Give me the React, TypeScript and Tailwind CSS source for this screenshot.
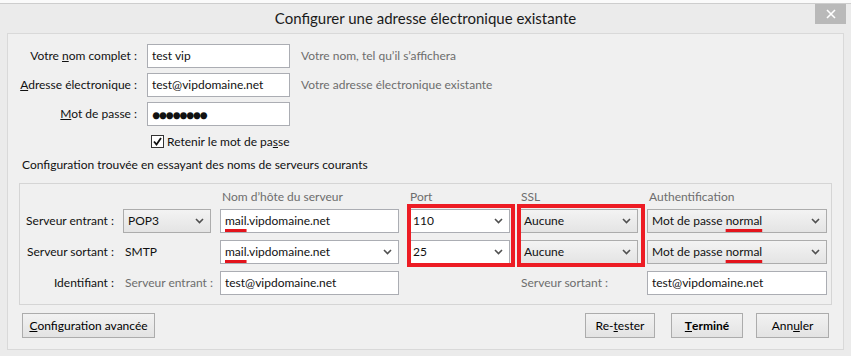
import React from "react"

const font = "font-['Lato','Noto_Sans',sans-serif]"

function Chevron() {
  return (
    <svg width="9" height="6" viewBox="0 0 9 6" className="shrink-0">
      <path d="M1 1 L4.5 4.5 L8 1" fill="none" stroke="#505050" strokeWidth="1.6" />
    </svg>
  )
}

function Field({ children, className = "" }: { children?: React.ReactNode; className?: string }) {
  return (
    <div className={"flex h-[24px] items-center border border-[#abadb3] bg-white pl-[4px] " + className}>
      {children}
    </div>
  )
}

function Combo({ children, white = false }: { children: React.ReactNode; white?: boolean }) {
  return (
    <div
      className={
        "flex h-[24px] items-center justify-between border pl-[4px] pr-[6px] " +
        (white
          ? "border-[#abadb3] bg-white"
          : "border-[#acacac] bg-linear-to-b from-[#f3f3f3] to-[#e4e4e4]")
      }
    >
      <span>{children}</span>
      <Chevron />
    </div>
  )
}

function Button({ children, className = "" }: { children: React.ReactNode; className?: string }) {
  return (
    <button
      className={
        "flex h-[25px] items-center justify-center border border-[#acacac] bg-linear-to-b from-[#f2f2f2] to-[#e3e3e3] text-[12px] text-black " +
        className
      }
    >
      {children}
    </button>
  )
}

const mark = "underline decoration-[#e3141c] decoration-[3px] underline-offset-[4px]"

export default function App() {
  return (
    <div className={"h-[356px] w-[851px] overflow-hidden whitespace-nowrap bg-[#ebebeb] text-[12px] text-[#111] " + font}>
      <div className="h-[4px] border-b border-[#cdcdcd] bg-[#fafafa]" />

      {/* title bar */}
      <div className="relative flex h-[29px] items-center justify-center">
        <span className="text-[15px] text-[#1a1a1a]">Configurer une adresse électronique existante</span>
        <div className="absolute right-[5px] top-0 flex h-[20px] w-[31px] items-center justify-center bg-[#b9b9b9]">
          <svg width="10" height="10" viewBox="0 0 10 10">
            <path d="M1 1 L9 9 M9 1 L1 9" stroke="#fff" strokeWidth="1.6" />
          </svg>
        </div>
      </div>

      {/* panel */}
      <div className="mx-[7px] h-[317px] border border-[#d9d9d9] bg-[#f0f0f0] pt-[10px]">
        <div className="grid grid-cols-[129px_143px_1fr] items-center gap-x-[10px] gap-y-[5px]">
          <div className="text-right">
            Votre <span className="underline">n</span>om complet :
          </div>
          <Field>test vip</Field>
          <div className="pl-[1px] text-[#6d6d6d]">Votre nom, tel qu’il s’affichera</div>

          <div className="text-right">
            <span className="underline">A</span>dresse électronique :
          </div>
          <Field>test@vipdomaine.net</Field>
          <div className="pl-[1px] text-[#6d6d6d]">Votre adresse électronique existante</div>

          <div className="text-right">
            <span className="underline">M</span>ot de passe :
          </div>
          <Field className="border-[#569de5] text-[14px] tracking-[-1.6px]">●●●●●●●●</Field>
          <div />
        </div>

        <div className="ml-[143px] mt-[9px] flex h-[13px] items-center gap-[3px]">
          <div className="flex h-[13px] w-[13px] items-center justify-center border border-[#333] bg-white">
            <svg width="9" height="9" viewBox="0 0 9 9">
              <path d="M1 4.5 L3.5 7.5 L8 1" fill="none" stroke="#111" strokeWidth="1.8" />
            </svg>
          </div>
          <span>
            Retenir le mot de pa<span className="underline">s</span>se
          </span>
        </div>

        <div className="ml-[14px] mt-[9px] h-[16px] leading-[16px]">
          Configuration trouvée en essayant des noms de serveurs courants
        </div>

        {/* server group */}
        <div className="relative mx-[11px] mt-[10px] h-[122px] border border-[#d5d5d5] pt-[5px]">
          <div className="grid grid-cols-[94px_88px_179px_102px_119px_180px] items-center gap-x-[9px]">
            <div />
            <div />
            <div className="h-[16px] pl-[2px] leading-[16px] text-[#6d6d6d]">Nom d’hôte du serveur</div>
            <div className="h-[16px] pl-[2px] leading-[16px] text-[#6d6d6d]">Port</div>
            <div className="h-[16px] pl-[2px] leading-[16px] text-[#6d6d6d]">SSL</div>
            <div className="h-[16px] pl-[2px] leading-[16px] text-[#6d6d6d]">Authentification</div>
          </div>

          <div className="mt-[4px] grid grid-cols-[94px_88px_179px_102px_119px_180px] grid-rows-[24px_24px_24px] items-center gap-x-[9px] gap-y-[7px]">
            <div className="text-right">Serveur entrant :</div>
            <Combo>POP3</Combo>
            <Field>
              <span className={mark}>mail</span>.vipdomaine.net
            </Field>
            <Combo white>110</Combo>
            <Combo>Aucune</Combo>
            <Combo>
              Mot de passe <span className={mark}>normal</span>
            </Combo>

            <div className="text-right">Serveur sortant :</div>
            <div className="pl-[2px]">SMTP</div>
            <Combo white>
              <span className={mark}>mail</span>.vipdomaine.net
            </Combo>
            <Combo white>25</Combo>
            <Combo>Aucune</Combo>
            <Combo>
              Mot de passe <span className={mark}>normal</span>
            </Combo>

            <div className="text-right">Identifiant :</div>
            <div className="pl-[2px] text-[#6d6d6d]">Serveur entrant :</div>
            <Field>test@vipdomaine.net</Field>
            <div />
            <div className="pl-[2px] text-[#6d6d6d]">Serveur sortant :</div>
            <Field>test@vipdomaine.net</Field>
          </div>

          {/* red annotation boxes */}
          <div className="absolute left-[387px] top-[20px] h-[63px] w-[108px] border-[4px] border-[#ed1c24]" />
          <div className="absolute left-[497px] top-[20px] h-[63px] w-[128px] border-[4px] border-[#ed1c24]" />
        </div>

        <div className="mx-[14px] mt-[8px] flex items-center">
          <Button className="w-[133px]">
            <span className="underline">C</span>onfiguration avancée
          </Button>
          <div className="flex-1" />
          <Button className="w-[70px]">
            Re-<span className="underline">t</span>ester
          </Button>
          <Button className="ml-[16px] w-[72px] font-bold">
            <span className="underline">T</span>erminé
          </Button>
          <Button className="ml-[13px] w-[73px]">
            Ann<span className="underline">u</span>ler
          </Button>
        </div>
      </div>
    </div>
  )
}
